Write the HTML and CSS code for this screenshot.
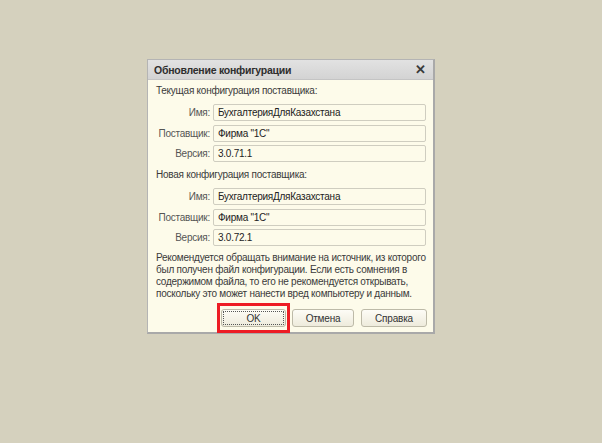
FILE: index.html
```html
<!DOCTYPE html>
<html lang="ru">
<head>
    <meta charset="UTF-8">
    <title>Обновление конфигурации</title>
    <link rel="stylesheet" href="styles.css">
</head>
<body>
    <div class="dialog">
        <div class="titlebar">
            <span class="title">Обновление конфигурации</span>
            <span class="close">&#x2715;</span>
        </div>
        <div class="content">
            <div class="group-title">Текущая конфигурация поставщика:</div>
            <div class="fields">
                <label>Имя:</label><div class="field">БухгалтерияДляКазахстана</div>
                <label>Поставщик:</label><div class="field">Фирма "1С"</div>
                <label>Версия:</label><div class="field">3.0.71.1</div>
            </div>

            <div class="group-title">Новая конфигурация поставщика:</div>
            <div class="fields">
                <label>Имя:</label><div class="field">БухгалтерияДляКазахстана</div>
                <label>Поставщик:</label><div class="field">Фирма "1С"</div>
                <label>Версия:</label><div class="field">3.0.72.1</div>
            </div>

            <p class="warning">Рекомендуется обращать внимание на источник, из которого был получен файл конфигурации. Если есть сомнения в содержимом файла, то его не рекомендуется открывать, поскольку это может нанести вред компьютеру и данным.</p>

            <div class="buttons">
                <span class="mark"><button class="btn btn-ok">OK</button></span>
                <button class="btn btn-cancel">Отмена</button>
                <button class="btn btn-help">Справка</button>
            </div>
        </div>
    </div>
</body>
</html>
```

FILE: styles.css
```css
body {
    margin: 0;
    padding: 59px 0 0 147px;
    background-color: #d5d1be;
    font-family: "Liberation Sans", Arial, sans-serif;
    font-size: 10px;
    letter-spacing: -0.25px;
    color: #3a3a3a;
}

.dialog {
    width: 285px;
    border: 1px solid #b4b4b4;
    border-right: 2px solid #a9a9a9;
    border-bottom: 2px solid #a9a9a9;
    background-color: #fdfbea;
}

.titlebar {
    height: 19px;
    display: flex;
    align-items: center;
    justify-content: space-between;
    padding: 0 6px;
    background: linear-gradient(#e2e2e2, #d3d3d3);
    border-bottom: 1px solid #c4c4c4;
}

.title {
    font-weight: bold;
    font-size: 10.5px;
    color: #2e2e2e;
}

.close {
    font-size: 13px;
    font-weight: bold;
    color: #3a3a3a;
    margin-right: 1px;
}

.content {
    padding: 4px 5px 5px 8px;
}

.group-title {
    height: 13px;
    line-height: 13px;
    margin-bottom: 7px;
}

.fields {
    display: grid;
    grid-template-columns: 54px 213px;
    column-gap: 3px;
    row-gap: 3.5px;
    align-items: center;
    margin-bottom: 6px;
}

.fields label {
    text-align: right;
    color: #555;
}

.field {
    height: 15px;
    line-height: 15px;
    padding: 0 4px;
    border: 1px solid #cfcdc0;
    border-radius: 2px;
    background-color: #fdfbea;
    color: #222;
}

.warning {
    margin: 0;
    line-height: 12px;
    width: 272px;
}

.buttons {
    display: flex;
    justify-content: flex-end;
    align-items: center;
    margin-top: 9px;
    padding-right: 1px;
}

/* red frame drawn around the default button */
.mark {
    display: inline-flex;
    padding: 3px 1px;
    margin: -6px -4px;
    border: 3px solid #ed1c24;
}

.btn {
    height: 18px;
    padding: 0;
    font-family: "Liberation Sans", Arial, sans-serif;
    font-size: 10px;
    letter-spacing: -0.2px;
    color: #333;
    border: 1px solid #bdbaa8;
    border-radius: 3px;
    background: linear-gradient(#fdfcf6, #eeebdc);
}

.btn-ok {
    width: 65px;
    outline: 1px dotted #555;
    outline-offset: -3px;
}

.btn-cancel {
    width: 62px;
    margin-left: 6px;
}

.btn-help {
    width: 66px;
    margin-left: 7px;
}
```
